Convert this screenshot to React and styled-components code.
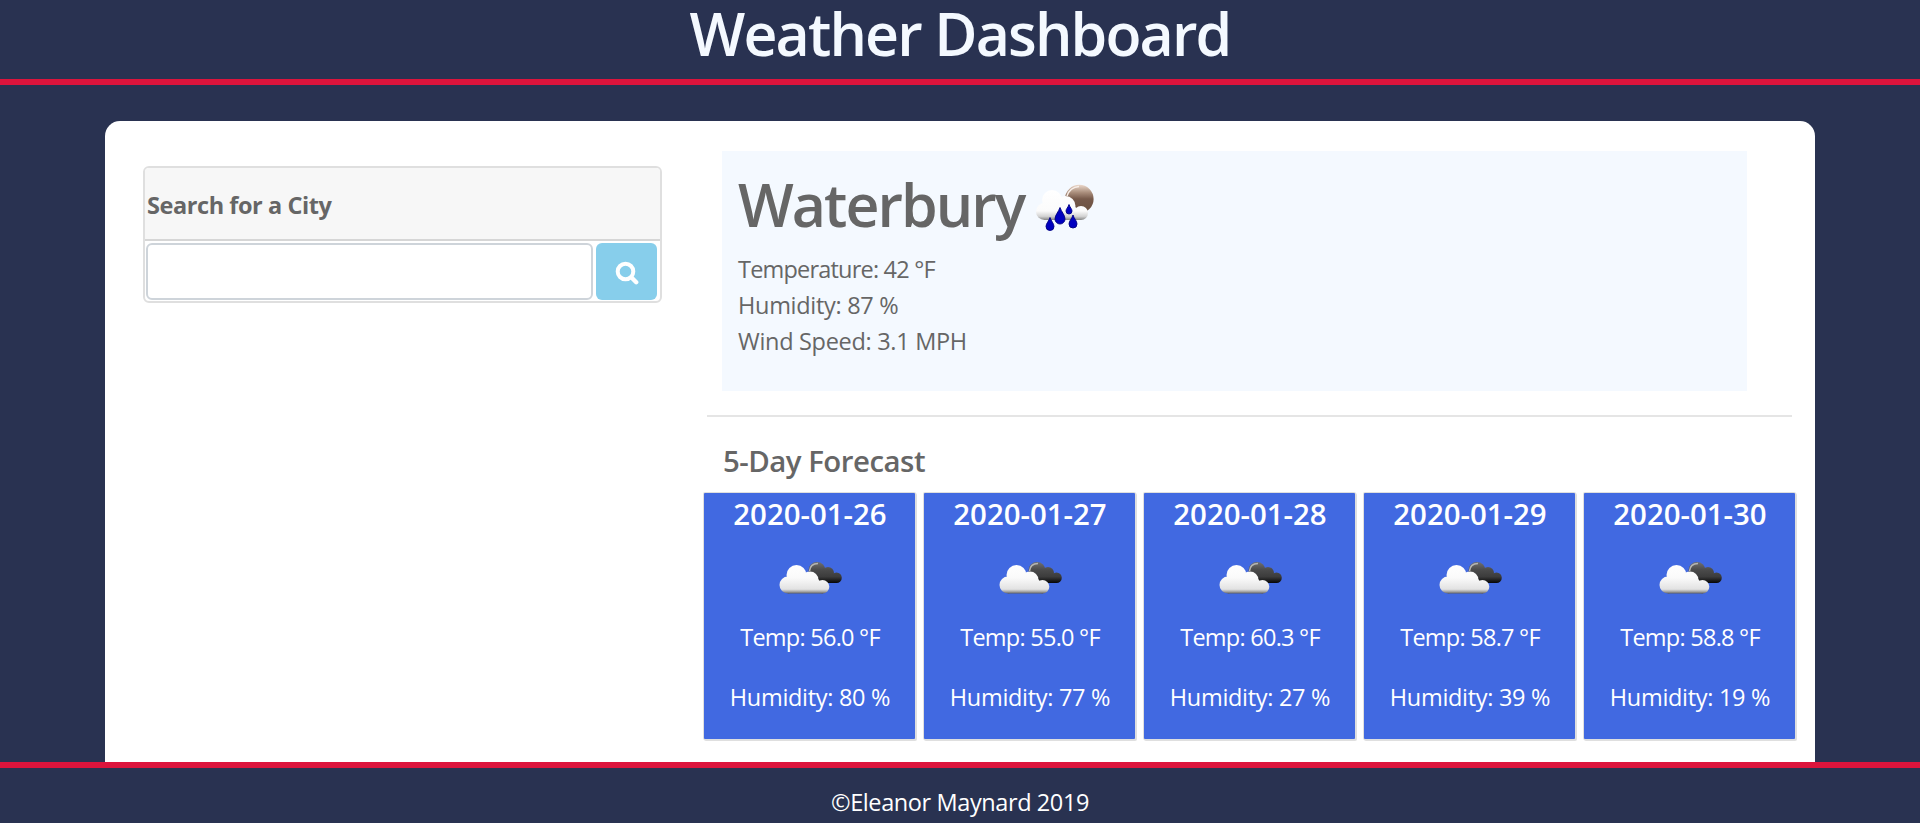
import React from "react";
import styled, { createGlobalStyle } from "styled-components";

const GlobalStyle = createGlobalStyle`
  *, *::before, *::after { box-sizing: border-box; }
  body {
    margin: 0;
    background: #293251;
    color: #666;
    font-family: "Open Sans", "Noto Sans", sans-serif;
    font-size: 23.5px;
    line-height: 36px;
  }
  h1, h2, h3, p { margin: 0; }
`;

const Page = styled.div`
  display: flex;
  flex-direction: column;
  height: 823px;
  overflow: hidden;
`;

const Header = styled.header`
  height: 85px;
  flex: none;
  border-bottom: 6px solid #dc143c;
  text-align: center;
`;

const SiteTitle = styled.h1`
  color: #f4f9ff;
  font-size: 59px;
  font-weight: 600;
  line-height: 67px;
  letter-spacing: -1.85px;
`;

const Main = styled.main`
  display: flex;
  align-items: flex-start;
  width: 1710px;
  height: 641px;
  flex: none;
  margin: 36px auto 0;
  padding: 30px 20px 0 38px;
  background: #fff;
  border-radius: 15px 15px 0 0;
`;

const SearchCard = styled.section`
  width: 519px;
  height: 137px;
  flex: none;
  margin-top: 15px;
  border: 2px solid #dfdfdf;
  border-radius: 6px;
  overflow: hidden;
`;

const SearchHeading = styled.h3`
  height: 73px;
  padding: 19px 2px 0;
  border-bottom: 2px solid #d6d6d6;
  background: #f7f7f7;
  font-size: 23.5px;
  font-weight: 700;
  line-height: 36px;
  letter-spacing: -0.43px;
`;

const SearchForm = styled.form`
  display: flex;
  gap: 3px;
  padding: 2px 3px 2px 1px;
`;

const SearchInput = styled.input`
  width: 447px;
  height: 57px;
  padding: 9px 18px;
  border: 2px solid #ced4da;
  border-radius: 6px;
  background: #fff;
  font: inherit;
  outline: none;
`;

const SearchButton = styled.button`
  display: flex;
  align-items: center;
  justify-content: center;
  width: 61px;
  height: 57px;
  padding: 2px 0 0;
  border: 0;
  border-radius: 6px;
  background: #87ceeb;
`;

const Results = styled.section`
  flex: 1;
  display: flex;
  flex-direction: column;
  margin-left: 42px;
`;

const Current = styled.article`
  width: 1025px;
  height: 240px;
  margin-left: 18px;
  padding: 17px 16px 0;
  background: #f4f9ff;
`;

const CityRow = styled.div`
  display: flex;
  gap: 1px;
  height: 83px;
`;

const CityName = styled.h1`
  font-size: 59px;
  font-weight: 600;
  line-height: 73px;
  white-space: nowrap;
  letter-spacing: -1.95px;
`;

const Reading = styled.p`
  letter-spacing: ${(p) => p.$track}px;
`;

const Divider = styled.hr`
  width: 1085px;
  height: 2px;
  margin: 24px 0 0 3px;
  border: 0;
  background: #e5e5e5;
`;

const ForecastTitle = styled.h2`
  margin: 23px 0 0 19px;
  font-size: 29.4px;
  font-weight: 600;
  line-height: 42px;
  letter-spacing: -0.5px;
`;

const ForecastRow = styled.div`
  display: flex;
  gap: 9px;
  margin-top: 11px;
`;

const Day = styled.article`
  display: flex;
  flex-direction: column;
  align-items: center;
  width: 211px;
  height: 246px;
  flex: none;
  padding-left: 1px;
  background: #4169e1;
  box-shadow: 0 0 0 1px #dfdfdf, 1px 1px 0 1px #dfdfdf;
  border-radius: 1px;
  color: #fff;
`;

const DayDate = styled.h3`
  height: 67px;
  padding-top: 3px;
  font-size: 29.4px;
  font-weight: 600;
  line-height: 36px;
`;

const IconSlot = styled.div`
  height: 59px;
`;

const DayReading = styled(Reading)`
  height: 60px;
`;

const Footer = styled.footer`
  flex: 1;
  padding-top: 16px;
  border-top: 6px solid #dc143c;
  color: #fff;
  text-align: center;
  letter-spacing: -0.4px;
`;

const RainSvg = styled.svg`
  flex: none;
  margin-top: 2px;
`;

const SearchIcon = () => (
  <svg width="24" height="24" viewBox="0 0 24 24" fill="none" stroke="#fff" strokeLinecap="round">
    <circle cx="10.5" cy="10.5" r="7.8" strokeWidth="4" />
    <path d="M17 17l4.2 4.2" strokeWidth="4.4" />
  </svg>
);

const RainIcon = () => (
  <RainSvg width="75" height="75" viewBox="0 0 75 75">
    <defs>
      <linearGradient id="sun" x1="0" y1="0" x2="0" y2="1">
        <stop offset="0" stopColor="#ecd9cc" />
        <stop offset=".28" stopColor="#a88c7a" />
        <stop offset=".5" stopColor="#76594a" />
        <stop offset="1" stopColor="#69503f" />
      </linearGradient>
      <linearGradient id="rainCloud" gradientUnits="userSpaceOnUse" x1="0" y1="20" x2="0" y2="50">
        <stop offset="0" stopColor="#fff" />
        <stop offset=".7" stopColor="#fbfbfb" />
        <stop offset=".88" stopColor="#d2d2d2" />
        <stop offset="1" stopColor="#858585" />
      </linearGradient>
    </defs>
    <circle cx="53.3" cy="29" r="14.3" fill="url(#sun)" />
    <path d="M41 26c2-6 6-9 12-9.500" fill="none" stroke="#f8efe9" strokeWidth="1.500" />
    <g fill="url(#rainCloud)">
      <circle cx="26" cy="30" r="10" />
      <circle cx="18.5" cy="41.5" r="8.5" />
      <circle cx="39.5" cy="36" r="10" />
      <circle cx="55" cy="43" r="7" />
      <path d="M18 36H48L55 42V50H18Z" />
    </g>
    <g fill="#0000c0" stroke="#000080" strokeWidth=".9">
      <path d="M34 37.500C35.500 42 39 45 39 49A5 5 0 0 1 29 49C29 45 32.500 42 34 37.500Z" />
      <path d="M43 34.500C44 37.500 46 39 46 41A3 3 0 0 1 40 41C40 39 42 37.500 43 34.500Z" />
      <path d="M24 47.500C25 51 28 53.500 28 56.500A4 4 0 0 1 20 56.500C20 53.500 23 51 24 47.500Z" />
      <path d="M47 45C48 48.500 51 51 51 54A4 4 0 0 1 43 54C43 51 46 48.500 47 45Z" />
    </g>
  </RainSvg>
);

const CloudsIcon = () => (
  <svg width="66" height="36" viewBox="0 0 66 36">
    <defs>
      <linearGradient id="darkCloud" gradientUnits="userSpaceOnUse" x1="0" y1="2" x2="0" y2="23">
        <stop offset="0" stopColor="#707070" />
        <stop offset=".35" stopColor="#4c4c4c" />
        <stop offset=".7" stopColor="#3c3c3c" />
        <stop offset="1" stopColor="#050505" />
      </linearGradient>
      <linearGradient id="lightCloud" gradientUnits="userSpaceOnUse" x1="0" y1="5" x2="0" y2="33.5">
        <stop offset="0" stopColor="#fff" />
        <stop offset=".45" stopColor="#fafafa" />
        <stop offset=".85" stopColor="#e2e2e2" />
        <stop offset=".94" stopColor="#a0a0a0" />
        <stop offset="1" stopColor="#606060" />
      </linearGradient>
    </defs>
    <g fill="url(#darkCloud)">
      <circle cx="40" cy="10.5" r="8.500" />
      <circle cx="51" cy="13" r="6" />
      <circle cx="59.5" cy="17.7" r="5.300" />
      <path d="M38 12H54L59.500 17V23H38Z" />
    </g>
    <path d="M32.500 11C33 6 36 3.500 41 3.500" fill="none" stroke="#b4b4b4" strokeWidth="1.600" />
    <g fill="url(#lightCloud)">
      <circle cx="19.5" cy="15" r="10" />
      <circle cx="11" cy="25" r="8.500" />
      <circle cx="33" cy="20" r="8.500" />
      <circle cx="45.5" cy="26.700" r="6.800" />
      <path d="M11 19H41L46 25V33.500H11Z" />
    </g>
  </svg>
);

const days = [
  { date: "2020-01-26", temp: "56.0", humidity: 80 },
  { date: "2020-01-27", temp: "55.0", humidity: 77 },
  { date: "2020-01-28", temp: "60.3", humidity: 27 },
  { date: "2020-01-29", temp: "58.7", humidity: 39 },
  { date: "2020-01-30", temp: "58.8", humidity: 19 },
];

export default function App() {
  return (
    <>
      <GlobalStyle />
      <Page>
        <Header>
          <SiteTitle>Weather Dashboard</SiteTitle>
        </Header>
        <Main>
          <SearchCard>
            <SearchHeading>Search for a City</SearchHeading>
            <SearchForm>
              <SearchInput aria-label="City" />
              <SearchButton type="button" aria-label="Search">
                <SearchIcon />
              </SearchButton>
            </SearchForm>
          </SearchCard>
          <Results>
            <Current>
              <CityRow>
                <CityName>Waterbury</CityName>
                <RainIcon />
              </CityRow>
              <Reading $track={-0.8}>Temperature: 42 °F</Reading>
              <Reading $track={-0.3}>Humidity: 87 %</Reading>
              <Reading $track={-0.3}>Wind Speed: 3.1 MPH</Reading>
            </Current>
            <Divider />
            <ForecastTitle>5-Day Forecast</ForecastTitle>
            <ForecastRow>
              {days.map((d) => (
                <Day key={d.date}>
                  <DayDate>{d.date}</DayDate>
                  <IconSlot>
                    <CloudsIcon />
                  </IconSlot>
                  <DayReading $track={-0.75}>Temp: {d.temp} °F</DayReading>
                  <DayReading $track={-0.3}>Humidity: {d.humidity} %</DayReading>
                </Day>
              ))}
            </ForecastRow>
          </Results>
        </Main>
        <Footer>©Eleanor Maynard 2019</Footer>
      </Page>
    </>
  );
}
